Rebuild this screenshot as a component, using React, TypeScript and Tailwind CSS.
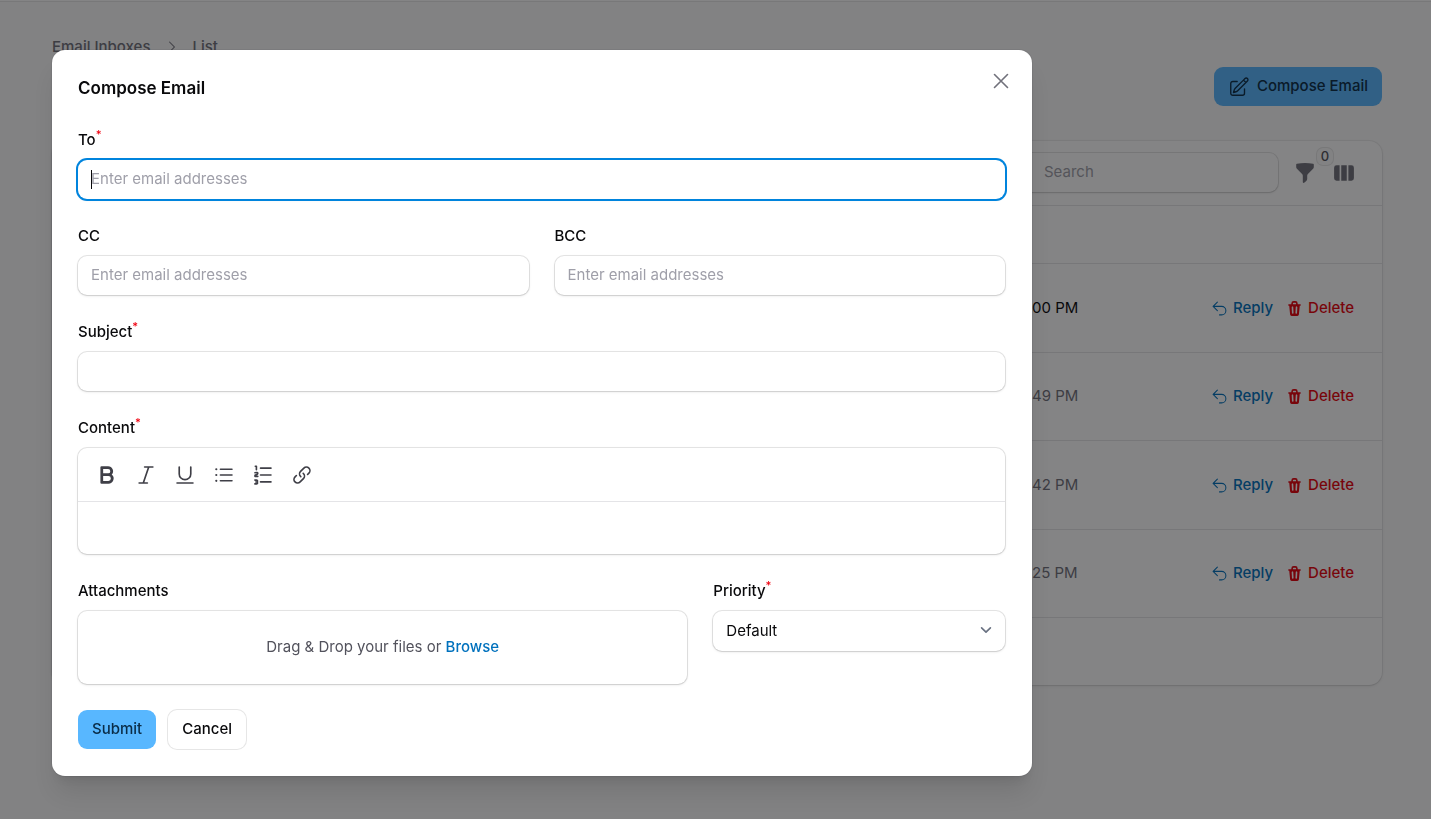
import React from 'react';
import {
  HiChevronRight,
  HiMiniBold,
  HiMiniFunnel,
  HiMiniItalic,
  HiMiniLink,
  HiMiniListBullet,
  HiMiniNumberedList,
  HiMiniUnderline,
  HiMiniViewColumns,
  HiOutlineArrowUturnLeft,
  HiOutlinePencilSquare,
  HiOutlineXMark,
} from 'react-icons/hi2';

const fieldBox = 'w-full rounded-[9px] bg-white ring-1 ring-zinc-950/10 shadow-sm';
const inputClass = `${fieldBox} h-[39px] px-[13px] pb-0.5 text-[15px] text-zinc-950 placeholder:text-zinc-400 outline-none`;

const rows = [
  { time: '00 PM', unread: true },
  { time: '49 PM', unread: false },
  { time: '42 PM', unread: false },
  { time: '25 PM', unread: false },
];

const editorTools = [
  { label: 'Bold', icon: <HiMiniBold size={22} /> },
  { label: 'Italic', icon: <HiMiniItalic size={22} /> },
  { label: 'Underline', icon: <HiMiniUnderline size={22} /> },
  { label: 'Bullet list', icon: <HiMiniListBullet size={22} /> },
  { label: 'Numbered list', icon: <HiMiniNumberedList size={22} /> },
  { label: 'Link', icon: <HiMiniLink size={22} /> },
];

const TrashIcon: React.FC = () => (
  <svg viewBox="0 0 16 16" fill="currentColor" className="size-[17px]" aria-hidden="true">
    <path
      fillRule="evenodd"
      clipRule="evenodd"
      d="M5 3.25V4H2.75a.75.75 0 0 0 0 1.5h.3l.815 8.15A1.5 1.5 0 0 0 5.357 15h5.285a1.5 1.5 0 0 0 1.493-1.35l.815-8.15h.3a.75.75 0 0 0 0-1.5H11v-.75A2.25 2.25 0 0 0 8.75 1h-1.5A2.25 2.25 0 0 0 5 3.25Zm2.25-.75a.75.75 0 0 0-.75.75V4h3v-.75a.75.75 0 0 0-.75-.75h-1.5ZM6.05 6a.75.75 0 0 1 .787.713l.275 5.5a.75.75 0 0 1-1.498.075l-.275-5.5A.75.75 0 0 1 6.05 6Zm3.9 0a.75.75 0 0 1 .712.787l-.275 5.5a.75.75 0 0 1-1.498-.075l.275-5.5a.75.75 0 0 1 .786-.711Z"
    />
  </svg>
);

interface FieldProps {
  id: string;
  label: string;
  required?: boolean;
  className?: string;
  children: React.ReactNode;
}

const Field: React.FC<FieldProps> = ({ id, label, required, className, children }) => (
  <div className={className}>
    <label htmlFor={id} className="block h-6 mb-2 text-[15px] leading-6 font-medium text-zinc-950">
      {label}
      {required && <sup className="text-[#f0000f]">*</sup>}
    </label>
    {children}
  </div>
);

const InboxPage: React.FC = () => (
  <div className="min-h-screen bg-zinc-50">
    <header className="h-0.5 bg-white border-b border-zinc-950/10"></header>

    <main className="pl-[52px] pr-[49px] pt-9">
      <div className="flex items-start justify-between">
        <nav className="flex items-center gap-[13px] text-[15px] leading-[18px] font-medium text-zinc-500">
          <a href="#inboxes">Email Inboxes</a>
          <HiChevronRight size={16} />
          <a href="#list">List</a>
        </nav>
        <button className="mt-[29px] h-[39px] px-[14px] flex items-center gap-[7px] rounded-[9px] bg-[#58b7ff] text-[15px] font-medium text-[#0a2c47]">
          <HiOutlinePencilSquare size={22} />
          Compose Email
        </button>
      </div>

      <section className="mt-[35px] rounded-[13px] bg-white ring-1 ring-zinc-950/5 shadow-sm">
        <div className="h-16 px-6 flex items-center justify-end">
          <input
            type="search"
            aria-label="Search"
            placeholder="Search"
            className="h-[39px] w-[280px] mb-0.5 pl-[46px] pb-0.5 rounded-[9px] ring-1 ring-zinc-950/10 shadow-sm text-[15px] placeholder:text-zinc-400 outline-none"
          />
          <button aria-label="Filter" className="relative ml-4 mr-[17px] text-zinc-500">
            <HiMiniFunnel size={22} />
            <span className="absolute -top-3.5 left-[23px] w-4 h-[17px] rounded-md bg-zinc-50 ring-1 ring-zinc-950/10 text-center text-[13px] leading-4 font-medium text-zinc-600">
              0
            </span>
          </button>
          <button aria-label="Columns" className="mr-[3px] text-zinc-500">
            <HiMiniViewColumns size={22} />
          </button>
        </div>

        <table className="w-full text-[15px] border-y border-zinc-200">
          <thead>
            <tr className="h-[58px]">
              <th></th>
              <th className="w-[179px]"></th>
              <th className="w-[171px]"></th>
            </tr>
          </thead>
          <tbody>
            {rows.map((row) => (
              <tr key={row.time} className="odd:h-[89px] even:h-[88px] border-t border-zinc-200">
                <td></td>
                <td className={row.unread ? 'text-zinc-950' : 'text-zinc-500'}>{row.time}</td>
                <td>
                  <div className="flex items-center gap-[13px] font-medium">
                    <button className="flex items-center gap-[5px] text-[#0071bd]">
                      <HiOutlineArrowUturnLeft size={17} />
                      Reply
                    </button>
                    <button className="flex items-center gap-[5px] text-red-600">
                      <TrashIcon />
                      Delete
                    </button>
                  </div>
                </td>
              </tr>
            ))}
          </tbody>
        </table>
        <div className="h-[67px]"></div>
      </section>
    </main>
  </div>
);

const ComposeModal: React.FC = () => (
  <div className="fixed inset-0 flex items-start bg-zinc-950/50 pl-[52px] pt-[50px] pr-12 overflow-y-auto">
    <form
      role="dialog"
      aria-label="Compose Email"
      className="relative w-full max-w-[980px] pl-[26px] pt-[26px] pr-[27px] pb-[27px] rounded-[13px] bg-white ring-1 ring-zinc-950/5 shadow-xl"
      onSubmit={(e) => e.preventDefault()}
    >
      <button type="button" aria-label="Close" className="absolute top-[18px] right-[18px] text-zinc-500">
        <HiOutlineXMark size={26} />
      </button>
      <h2 className="text-[17px] leading-6 font-semibold text-zinc-950">Compose Email</h2>

      <div className="mt-7 grid grid-cols-6 gap-x-[26px] gap-y-[25px]">
        <Field id="to" label="To" required className="col-span-6">
          <div className="relative">
            <input
              id="to"
              type="text"
              autoFocus
              placeholder="Enter email addresses"
              className="block w-full h-[39px] px-[13px] pb-0.5 rounded-[9px] bg-white ring-2 ring-[#0084dd] shadow-sm text-[15px] text-zinc-950 placeholder:text-zinc-400 outline-none caret-transparent"
            />
            {/* Text cursor */}
            <span className="absolute left-[13px] top-2.5 w-px h-[19px] bg-zinc-950 pointer-events-none"></span>
          </div>
        </Field>

        <Field id="cc" label="CC" className="col-span-3">
          <input id="cc" type="text" placeholder="Enter email addresses" className={inputClass} />
        </Field>
        <Field id="bcc" label="BCC" className="col-span-3">
          <input id="bcc" type="text" placeholder="Enter email addresses" className={inputClass} />
        </Field>

        <Field id="subject" label="Subject" required className="col-span-6">
          <input id="subject" type="text" className={inputClass} />
        </Field>

        <Field id="content" label="Content" required className="col-span-6">
          <div className={fieldBox}>
            <div className="h-[54px] px-[11px] flex items-center gap-1 border-b border-zinc-200 text-zinc-700">
              {editorTools.map((tool) => (
                <button
                  key={tool.label}
                  type="button"
                  aria-label={tool.label}
                  className="w-[35px] h-9 flex items-center justify-center"
                >
                  {tool.icon}
                </button>
              ))}
            </div>
            <textarea id="content" className="block w-full h-[52px] px-4 py-3 text-[15px] resize-none outline-none"></textarea>
          </div>
        </Field>

        <Field id="attachments" label="Attachments" className="col-span-4">
          <div className={`${fieldBox} h-[73px] flex items-center justify-center text-[15px] text-zinc-600`}>
            <label htmlFor="attachments">
              Drag &amp; Drop your files or <span className="font-medium text-[#0071bd]">Browse</span>
            </label>
            <input id="attachments" type="file" className="sr-only" />
          </div>
        </Field>
        <Field id="priority" label="Priority" required className="col-span-2">
          <div className="relative">
            <select
              id="priority"
              className={`${fieldBox} block h-10 px-[13px] text-[15px] text-zinc-950 appearance-none outline-none`}
            >
              <option>Default</option>
            </select>
            <svg
              viewBox="0 0 20 20"
              fill="none"
              stroke="currentColor"
              strokeWidth="1.5"
              strokeLinecap="round"
              strokeLinejoin="round"
              className="absolute right-2 top-2 size-[22px] text-gray-500 pointer-events-none"
              aria-hidden="true"
            >
              <path d="m6 8 4 4 4-4" />
            </svg>
          </div>
        </Field>
      </div>

      <div className="mt-[26px] flex gap-3 text-[15px] font-medium">
        <button type="submit" className="h-[39px] px-[14px] rounded-[9px] bg-[#58b7ff] text-[#0a2c47]">
          Submit
        </button>
        <button type="button" className="h-[39px] px-[14px] rounded-[9px] bg-white ring-1 ring-zinc-950/10 text-zinc-950">
          Cancel
        </button>
      </div>
    </form>
  </div>
);

export default function App() {
  return (
    <div className="font-['Inter',sans-serif]">
      <InboxPage />
      <ComposeModal />
    </div>
  );
}
